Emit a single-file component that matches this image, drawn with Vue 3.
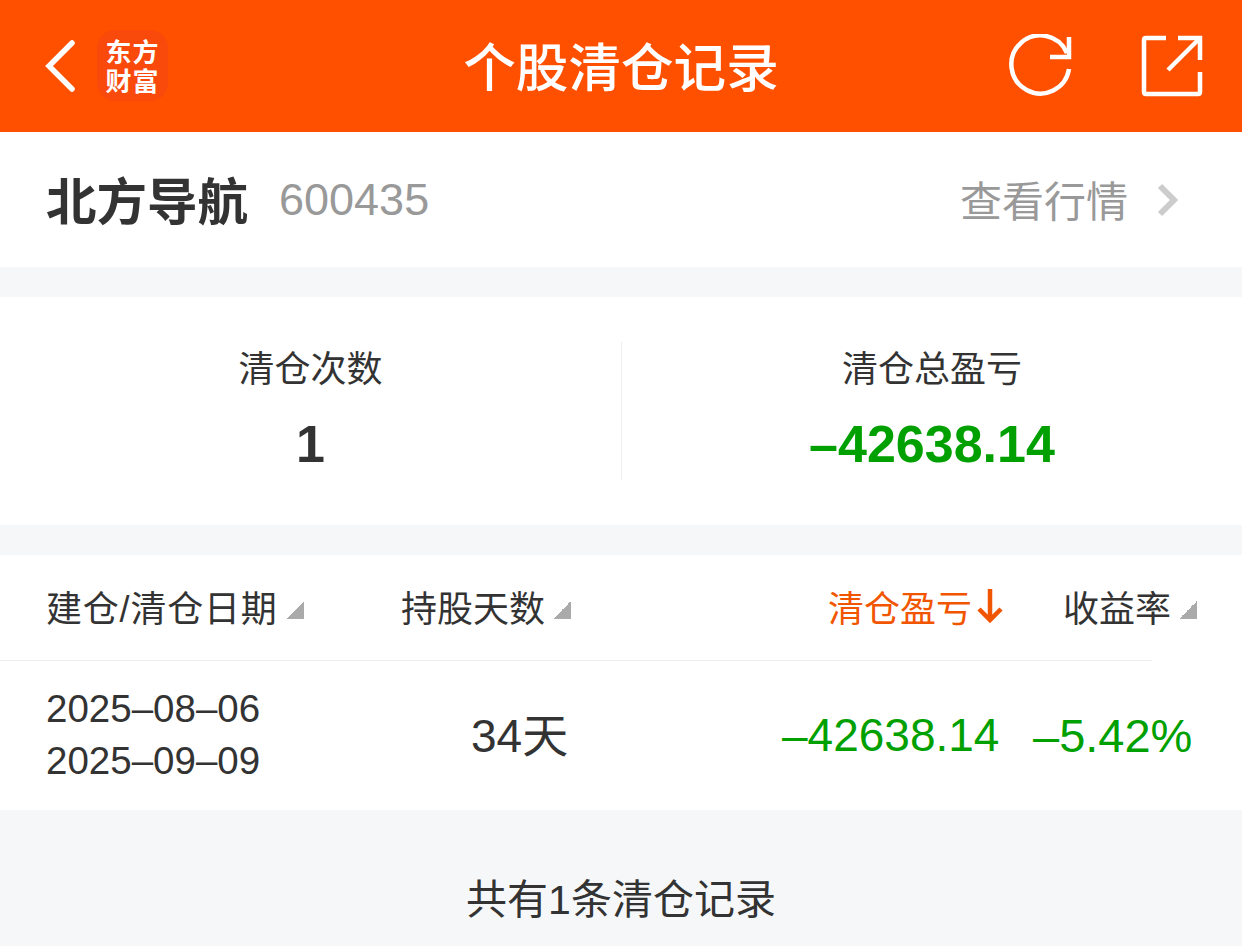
<script setup>
const stats = [
  { label: '清仓次数', value: '1', green: false },
  { label: '清仓总盈亏', value: '–42638.14', green: true },
]
</script>

<template>
  <div class="page">
    <header class="topbar">
      <div class="top-left">
        <svg class="back" width="32" height="54" viewBox="0 0 32 54">
          <path d="M28 4 L5 27 L28 50" fill="none" stroke="#fff" stroke-width="5.5" stroke-linecap="round" />
        </svg>
        <div class="logo">
          <span>东方</span>
          <span>财富</span>
        </div>
      </div>
      <h1>个股清仓记录</h1>
      <div class="top-right">
        <svg width="64" height="64" viewBox="0 0 64 64">
          <path d="M60 35 A29 29 0 1 1 58 19" fill="none" stroke="#fff" stroke-width="4.5" />
          <path d="M60 3 V23 H41" fill="none" stroke="#fff" stroke-width="4.5" />
        </svg>
        <svg width="62" height="62" viewBox="0 0 62 62">
          <path d="M25 3 H5 Q3 3 3 5 V57 Q3 59 5 59 H57 Q59 59 59 57 V37" fill="none" stroke="#fff" stroke-width="4.5" />
          <path d="M37 3 H59 V25" fill="none" stroke="#fff" stroke-width="4.5" />
          <path d="M27 35 L58 4" fill="none" stroke="#fff" stroke-width="4.5" />
        </svg>
      </div>
    </header>

    <section class="stock">
      <div class="stock-name">
        <strong>北方导航</strong>
        <span>600435</span>
      </div>
      <div class="stock-link">
        <span>查看行情</span>
        <svg width="22" height="34" viewBox="0 0 22 34">
          <path d="M3 3 L17 17 L3 31" fill="none" stroke="#ccc" stroke-width="6" />
        </svg>
      </div>
    </section>

    <section class="stats">
      <div class="stat" v-for="s in stats" :key="s.label">
        <div class="stat-label">{{ s.label }}</div>
        <div class="stat-value" :class="{ green: s.green }">{{ s.value }}</div>
      </div>
    </section>

    <section class="table">
      <div class="thead">
        <div class="th c1">建仓/清仓日期<i class="tri"></i></div>
        <div class="th c2">持股天数<i class="tri"></i></div>
        <div class="th c3 active">清仓盈亏
          <svg class="arrow" width="26" height="36" viewBox="0 0 26 36">
            <path d="M13 1 V32 M2 21 L13 32 L24 21" fill="none" stroke="#f25500" stroke-width="4.5" />
          </svg>
        </div>
        <div class="th c4">收益率<i class="tri"></i></div>
      </div>
      <div class="trow">
        <div class="dates">
          <div>2025–08–06</div>
          <div>2025–09–09</div>
        </div>
        <div class="days">34天</div>
        <div class="profit">–42638.14</div>
        <div class="rate">–5.42%</div>
      </div>
    </section>

    <footer class="foot">共有1条清仓记录</footer>
  </div>
</template>

<style>
html, body {
  margin: 0;
  background: #f6f7f9;
}
</style>

<style scoped>
.page {
  width: 1242px;
  height: 946px;
  overflow: hidden;
  background: #f6f7f9;
  color: #333;
  font-family: "Liberation Sans", "Noto Sans CJK SC", sans-serif;
}
.topbar {
  height: 132px;
  background: #ff5000;
  display: grid;
  grid-template-columns: 1fr auto 1fr;
  align-items: center;
  color: #fff;
}
.top-left {
  display: flex;
  align-items: center;
  padding-left: 44px;
  gap: 21px;
}
.logo {
  width: 71px;
  height: 71px;
  margin-bottom: 2px;
  border-radius: 18px;
  background: #f94a0c;
  display: flex;
  flex-direction: column;
  align-items: center;
  justify-content: center;
  font-family: "Noto Sans CJK SC", sans-serif;
  font-size: 26px;
  font-weight: 700;
  letter-spacing: 1px;
}
.logo span {
  display: block;
  line-height: 29px;
}
h1 {
  margin: 0 0 4px;
  font-size: 52.6px;
  font-weight: 500;
  font-family: "Noto Sans CJK SC", sans-serif;
}
.top-right {
  display: flex;
  justify-content: flex-end;
  align-items: center;
  gap: 68px;
  padding-right: 39px;
}
.stock {
  height: 135px;
  background: #fff;
  display: flex;
  justify-content: space-between;
  align-items: center;
  padding: 0 63px 0 47px;
  margin-bottom: 30px;
}
.stock-name {
  display: flex;
  align-items: center;
  gap: 31px;
}
.stock-name strong {
  font-size: 50.5px;
  font-weight: 700;
  margin: 0 0 4px -1px;
  font-family: "Noto Sans CJK SC", sans-serif;
}
.stock-name span {
  font-size: 45px;
  color: #999;
}
.stock-link {
  display: flex;
  align-items: center;
  gap: 29px;
  font-size: 42px;
  color: #999;
}
.stock-link span {
  margin-bottom: 3px;
}
.stats {
  height: 228px;
  background: #fff;
  display: grid;
  grid-template-columns: 1fr 1fr;
  align-items: center;
  margin-bottom: 30px;
}
.stat {
  height: 138px;
  text-align: center;
  display: flex;
  flex-direction: column;
  align-items: center;
  justify-content: center;
  gap: 15px;
  box-sizing: border-box;
}
.stat:first-child {
  border-right: 1px solid #eee;
  width: 622px;
}
.stat-label {
  font-size: 36px;
  line-height: 52px;
  margin-bottom: 3px;
}
.stat-value {
  font-size: 52px;
  line-height: 60px;
  font-weight: 700;
  margin-bottom: 4px;
}
.green {
  color: #00a000;
}
.table {
  background: #fff;
}
.thead {
  height: 105px;
  display: flex;
  align-items: center;
  font-size: 36px;
}
.th {
  display: flex;
  align-items: center;
  white-space: nowrap;
  margin-bottom: 4px;
}
.c1 { margin-left: 46px; width: 355px; letter-spacing: 0.8px; }
.c2 { width: 427px; }
.c3 { width: 235px; }
.active { color: #f25500; }
.arrow { margin-left: 5px; }
.tri {
  display: block;
  width: 18px;
  height: 18px;
  margin: 8px 0 0 8px;
  background: linear-gradient(135deg, transparent 50%, #aaa 50%);
}
.trow {
  position: relative;
  height: 150px;
  display: flex;
  align-items: center;
}
.trow::before {
  content: "";
  position: absolute;
  top: 0;
  left: 0;
  width: 1152px;
  height: 1px;
  background: #eee;
}
.dates {
  margin-left: 46px;
  width: 425px;
  font-size: 38.5px;
  line-height: 52px;
}
.days {
  width: 311px;
  font-size: 46px;
  margin-bottom: 6px;
}
.profit {
  width: 251px;
  font-size: 46px;
  color: #00a000;
}
.rate {
  font-size: 47px;
  color: #00a000;
}
.foot {
  padding-top: 60px;
  text-align: center;
  font-size: 41px;
  line-height: 60px;
}
</style>
